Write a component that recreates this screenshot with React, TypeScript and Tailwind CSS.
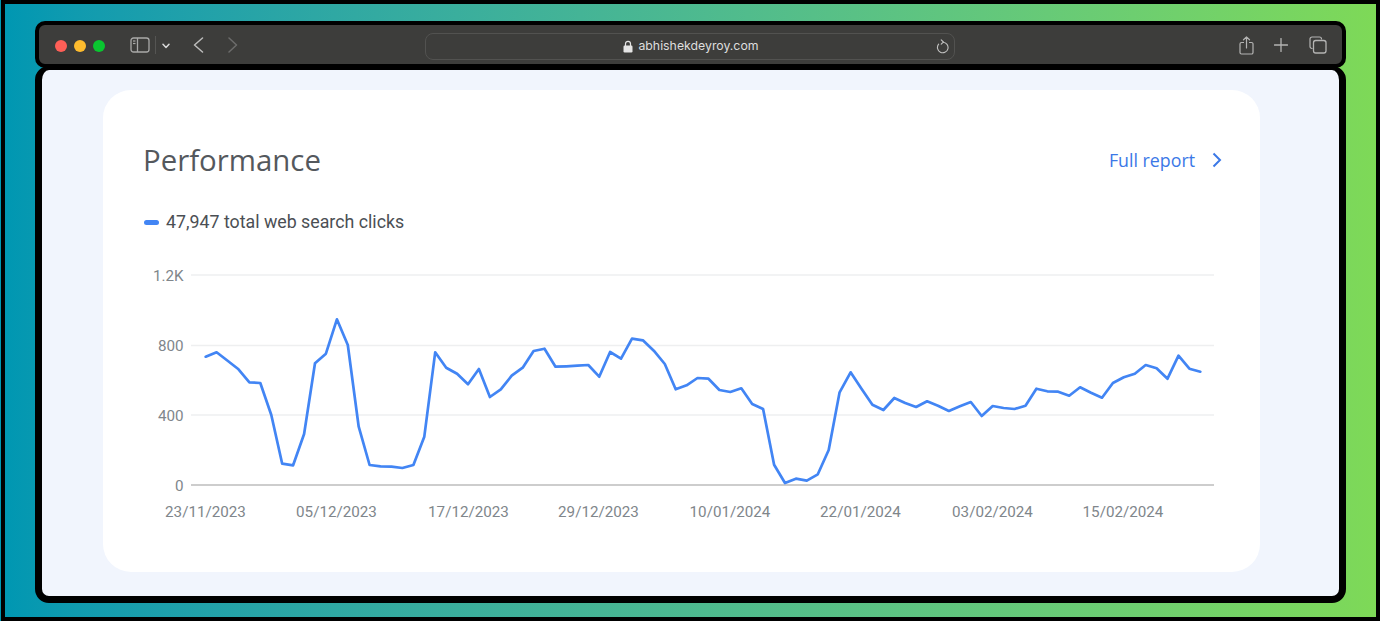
const clicks = [
  356.7, 352.3, 360.7, 369.3, 382.3, 383, 415, 463.7, 465.3, 434, 363.3, 353.7, 319.3, 345, 426.7, 465, 466.3, 466.7, 468, 465,
  436.7, 352.3, 367.7, 373.7, 384.3, 369, 397, 389.3, 375.7, 367.7, 351, 348.7, 366.7, 366.3, 365.7, 365, 376.7, 352, 358.7, 338.7,
  340.3, 350.7, 364, 389.3, 385.3, 378, 378.7, 390, 392, 388.3, 404, 409, 464.7, 483, 478.7, 480.7, 474.3, 450, 392.3, 372.3,
  388.7, 404.7, 410, 398, 403, 407, 401.3, 405.7, 411, 406.3, 402, 416, 406, 408, 409, 405.7, 388.7, 391.3, 391.7, 395.7,
  387.3, 392.7, 397.7, 383, 377.3, 373.7, 365, 368.3, 378.7, 355.7, 368.7, 371.7,
];

const yTicks = [
  { label: '1.2K', y: 275 },
  { label: '800', y: 345.5 },
  { label: '400', y: 415 },
];

const xTicks = [
  { label: '23/11/2023', x: 205.5 },
  { label: '05/12/2023', x: 336.5 },
  { label: '17/12/2023', x: 468.5 },
  { label: '29/12/2023', x: 598.5 },
  { label: '10/01/2024', x: 730 },
  { label: '22/01/2024', x: 860.5 },
  { label: '03/02/2024', x: 992.5 },
  { label: '15/02/2024', x: 1123 },
];

function Chart() {
  const points = clicks.map((y, i) => `${(205.7 + i * 10.93).toFixed(1)},${y}`).join(' ');

  // viewBox uses page coordinates, easier to compare with the screenshot
  return (
    <svg width="1080" height="270" viewBox="144 262 1080 270" className="block">
      {yTicks.map((t) => (
        <g key={t.label}>
          <line x1="191" x2="1214" y1={t.y} y2={t.y} stroke="#eeeff0" strokeWidth="1.3" />
          <text x="183.5" y={t.y + 5.5} textAnchor="end" fontSize="15.2" fill="#80868b" fontFamily="Roboto, sans-serif">
            {t.label}
          </text>
        </g>
      ))}
      <line x1="191" x2="1214" y1="485" y2="485" stroke="#bdbdbd" strokeWidth="1.4" />
      <text x="183.5" y="490.5" textAnchor="end" fontSize="15.2" fill="#80868b" fontFamily="Roboto, sans-serif">
        0
      </text>
      {xTicks.map((t) => (
        <text key={t.label} x={t.x} y="517" textAnchor="middle" fontSize="15.2" fill="#80868b" fontFamily="Roboto, sans-serif">
          {t.label}
        </text>
      ))}
      <polyline points={points} fill="none" stroke="#4285f4" strokeWidth="2.7" strokeLinejoin="round" strokeLinecap="round" />
    </svg>
  );
}

function Toolbar() {
  return (
    <div className="flex h-[47px] items-center rounded-[10px] border-4 border-black bg-[#3d3d3b] pl-[16px] pr-[15px] pt-[3px]">
      <div className="flex gap-[7px]">
        <div className="h-3 w-3 rounded-full bg-[#ff5f57]" />
        <div className="h-3 w-3 rounded-full bg-[#febc2e]" />
        <div className="h-3 w-3 rounded-full bg-[#0ac630]" />
      </div>
      <svg width="20" height="16" viewBox="0 0 20 16" fill="none" className="ml-[25px] -translate-y-px">
        <rect x="1" y="1" width="18" height="14" rx="2.5" stroke="#a9a9a8" strokeWidth="1.3" />
        <line x1="7.5" x2="7.5" y1="1" y2="15" stroke="#a9a9a8" strokeWidth="1.3" />
        <line x1="3" x2="5.5" y1="4" y2="4" stroke="#a9a9a8" strokeWidth="1.2" />
        <line x1="3" x2="5.5" y1="6.5" y2="6.5" stroke="#a9a9a8" strokeWidth="1.2" />
      </svg>
      <div className="ml-[5px] h-[18px] w-px -translate-y-px bg-[#555553]" />
      <svg width="8" height="6" viewBox="0 0 8 6" fill="none" className="ml-[6px]">
        <path d="M1 1.2 4 4.4 7 1.2" stroke="#d8d8d8" strokeWidth="1.5" strokeLinecap="round" strokeLinejoin="round" />
      </svg>
      <svg width="11" height="16" viewBox="0 0 11 16" fill="none" className="ml-[23px] -translate-y-px">
        <path d="M9.5 1 1.5 8l8 7" stroke="#bdbdbc" strokeWidth="1.5" strokeLinecap="round" strokeLinejoin="round" />
      </svg>
      <svg width="10" height="16" viewBox="0 0 10 16" fill="none" className="ml-[24px] -translate-y-px">
        <path d="M1 1l7.5 7L1 15" stroke="#6c6c6b" strokeWidth="1.5" strokeLinecap="round" strokeLinejoin="round" />
      </svg>
      <div className="relative ml-[187px] flex h-[27px] w-[530px] items-center justify-center rounded-lg border border-[#525250] pl-[2px]">
        <svg width="10" height="13" viewBox="0 0 10 13" fill="none" className="mr-[5px]">
          <path d="M2.5 6V3.8a2.5 2.5 0 0 1 5 0V6" stroke="#e4e4e4" strokeWidth="1.2" />
          <rect x="0.5" y="5.5" width="9" height="7" rx="1.2" fill="#e4e4e4" />
        </svg>
        <span className="text-[12.3px] text-[#dedede] [font-family:Inter,sans-serif]">abhishekdeyroy.com</span>
        <svg width="13" height="15" viewBox="0 0 13 15" fill="none" className="absolute right-[5px] top-[5px]">
          <path d="M2.6 5.2a5.3 5.3 0 1 0 4.4-2" stroke="#c2c2c1" strokeWidth="1.1" strokeLinecap="round" />
          <path d="M5.2 0.8 7.4 3 5.2 5.2" stroke="#c2c2c1" strokeWidth="1.1" strokeLinecap="round" strokeLinejoin="round" />
        </svg>
      </div>
      <div className="ml-auto flex items-center">
        <svg width="15" height="19" viewBox="0 0 15 19" fill="none" className="-translate-y-px">
          <path d="M5 6.5H2.5a1.5 1.5 0 0 0-1.5 1.5v8.5A1.5 1.5 0 0 0 2.5 18h10a1.5 1.5 0 0 0 1.5-1.5V8a1.5 1.5 0 0 0-1.5-1.5H10" stroke="#b4b4b3" strokeWidth="1.2" />
          <path d="M7.5 12V1M4.5 3.8 7.5 1l3 2.8" stroke="#b4b4b3" strokeWidth="1.2" strokeLinecap="round" strokeLinejoin="round" />
        </svg>
        <svg width="14" height="14" viewBox="0 0 14 14" fill="none" className="ml-[20px] -translate-y-px">
          <path d="M7 .5v13M.5 7h13" stroke="#b4b4b3" strokeWidth="1.3" strokeLinecap="round" />
        </svg>
        <svg width="18" height="18" viewBox="0 0 18 18" fill="none" className="ml-[21px] -translate-y-px">
          <path d="M3.5 12.5H3A2 2 0 0 1 1 10.5V3a2 2 0 0 1 2-2h7.5a2 2 0 0 1 2 2v.5" stroke="#b4b4b3" strokeWidth="1.2" />
          <rect x="4.5" y="4.5" width="12.5" height="12.5" rx="2.2" stroke="#b4b4b3" strokeWidth="1.3" />
        </svg>
      </div>
    </div>
  );
}

export default function App() {
  return (
    <div className="h-[621px] w-[1380px] overflow-hidden bg-[#0097b2] pl-px">
      <div className="h-full border-4 border-black bg-gradient-to-r from-[#0097b2] to-[#7ed957] px-[30px] pt-[17px]">
        <Toolbar />
        <div className="relative -mt-[2px] h-[537px] rounded-[14px] border-x-[7px] border-b-[7px] border-t-4 border-black bg-[#f1f5fd] pl-[61px] pr-[79px] pt-5">
          <div className="h-[482px] rounded-[28px] bg-white">
            <div className="flex items-center justify-between pl-[40px] pr-[38px] pt-[50px]">
              <h2 className="text-[29.4px] leading-[40px] text-[#54585d] [font-family:'Open_Sans',sans-serif]">Performance</h2>
              <a className="flex items-center text-[17.8px] font-medium text-[#3b78e7] [font-family:'Open_Sans',sans-serif]">
                Full report
                <svg width="10" height="16" viewBox="0 0 10 16" fill="none" className="ml-[17px]">
                  <path d="M1.5 1.5 8 8l-6.5 6.5" stroke="#3b78e7" strokeWidth="2" />
                </svg>
              </a>
            </div>
            <div className="mt-[30px] flex items-center pl-[41px]">
              <div className="h-[5px] w-[15px] rounded-full bg-[#4285f4]" />
              <span className="ml-[7px] text-[17.8px] leading-6 text-[#4b4f54] [font-family:Roboto,sans-serif]">47,947 total web search clicks</span>
            </div>
            <div className="mt-[28px] pl-[41px]">
              <Chart />
            </div>
          </div>
        </div>
      </div>
    </div>
  );
}
